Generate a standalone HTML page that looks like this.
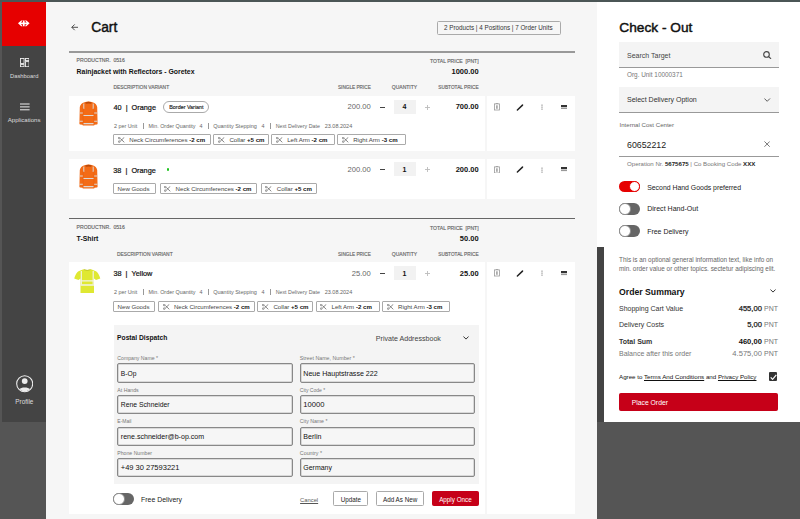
<!DOCTYPE html><html><head><meta charset="utf-8"><style>
*{margin:0;padding:0}
html,body{width:800px;height:519px;overflow:hidden;background:#555}
body{position:relative;font-family:"Liberation Sans", sans-serif}
body>div,body>svg{position:absolute}
.t{white-space:pre;line-height:1}
.tag{border:1px solid #aaa;box-sizing:border-box;background:#fff;border-radius:1px}
.t b{font-weight:700;color:#111}
.tag b{font-weight:700;color:#111}
.pill{border:0.8px solid #aaa;box-sizing:border-box;border-radius:6px;font-size:5.4px;font-weight:400;line-height:10.4px;text-align:center;color:#222;background:#fff;-webkit-text-stroke:0.15px #222}
.inp{border:1px solid #888;box-sizing:border-box;border-radius:2px;background:#f6f6f6;box-shadow:inset 0 0 0 0.5px #bbb}
.btn{border:1px solid #aaa;border-radius:1.5px;box-sizing:border-box;background:#fff;font-size:6.3px;line-height:15px;text-align:center;color:#222;white-space:pre}
.btn.red{background:#c60018;border-color:#c60018;color:#fff}
</style></head><body>
<div style="left:0px;top:0px;width:800px;height:519px;background:#555;"></div>
<div style="left:0px;top:0px;width:800px;height:2px;background:#4b5656;"></div>
<div style="left:46px;top:2px;width:551px;height:517px;background:#f6f6f6;"></div>
<div style="left:2px;top:2px;width:44px;height:420px;background:#444;"></div>
<div style="left:2px;top:2px;width:44px;height:44px;background:#e60000;"></div>
<div style="left:597px;top:2px;width:203px;height:420px;background:#fff;"></div>
<div style="left:597px;top:247px;width:7px;height:175px;background:#444;"></div>
<svg style="left:18.3px;top:20.4px" width="11.6" height="6.7" viewBox="0 0 13 8" preserveAspectRatio="none"><path d="M0 4 L3.6 0.6 H5.4 L3.2 2.9 H5.6 V0.6 H7.4 V2.9 H9.8 L7.6 0.6 H9.4 L13 4 L9.4 7.4 H7.6 L9.8 5.1 H7.4 V7.4 H5.6 V5.1 H3.2 L5.4 7.4 H3.6 Z" fill="#fff"/></svg>
<svg style="left:19.5px;top:58px" width="9.6" height="9.2" viewBox="0 0 9.6 9.2" fill="none" stroke="#eee" stroke-width="0.9"><rect x="0.45" y="0.45" width="3.6" height="5.1"/><rect x="0.45" y="6.6" width="3.6" height="2.15"/><rect x="5.5" y="0.45" width="3.6" height="2.15"/><rect x="5.5" y="3.6" width="3.6" height="5.15"/></svg>
<div class="t" style="left:10px;top:74px;font-size:5.8px;font-weight:400;color:#ddd;">Dashboard</div>
<svg style="left:19.5px;top:102px" width="10" height="9" viewBox="0 0 10 9" stroke="#eee" stroke-width="1"><path d="M0 2H9.6M0 4.9H9.6M0 7.8H9.6"/></svg>
<div class="t" style="left:7.7px;top:117px;font-size:6.1px;font-weight:400;color:#ddd;">Applications</div>
<svg style="left:15.8px;top:375.3px" width="17.4" height="17.4" viewBox="0 0 18 18"><circle cx="9" cy="9" r="8.3" fill="none" stroke="#eee" stroke-width="1.1"/><circle cx="9" cy="6.3" r="3" fill="#eee"/><path d="M3.6 14.6 C5 12.3 13 12.3 14.4 14.6 C13 16.2 11 17 9 17 C7 17 5 16.2 3.6 14.6Z" fill="#eee"/></svg>
<div class="t" style="left:15.3px;top:399px;font-size:6.4px;font-weight:400;color:#ddd;">Profile</div>
<svg style="left:71px;top:24.3px" width="7.4" height="6.6" viewBox="0 0 7.4 6.6" fill="none" stroke="#333" stroke-width="0.85"><path d="M7.2 3.3H0.8M3.7 0.4L0.8 3.3L3.7 6.2"/></svg>
<div class="t" style="left:91.2px;top:21px;font-size:13.8px;font-weight:400;color:#111;-webkit-text-stroke:0.45px #111;">Cart</div>
<div style="left:436.5px;top:20.5px;width:124.5px;height:14.0px;background:#f6f6f6;border:1px solid #aaa;box-sizing:border-box;border-radius:1.5px;"></div>
<div class="t" style="left:444px;top:25px;font-size:6.3px;font-weight:400;color:#333;">2 Products | 4 Positions | 7 Order Units</div>
<div style="left:69px;top:51px;width:506px;height:2px;background:#999;"></div>
<div class="t" style="left:76.6px;top:58px;font-size:5.1px;font-weight:400;color:#666;-webkit-text-stroke:0.15px #666;">PRODUCTNR.&nbsp;&nbsp;0516</div>
<div class="t" style="left:76.6px;top:69px;font-size:6.9px;font-weight:700;color:#111;">Rainjacket with Reflectors - Goretex</div>
<div class="t" style="right:321.40px;top:59px;font-size:5.1px;font-weight:400;color:#666;text-align:right;-webkit-text-stroke:0.15px #666;">TOTAL PRICE&nbsp;&nbsp;[PNT]</div>
<div class="t" style="right:321.40px;top:68px;font-size:7.5px;font-weight:700;color:#111;text-align:right;">1000.00</div>
<div class="t" style="left:113.5px;top:86px;font-size:4.9px;font-weight:400;color:#666;-webkit-text-stroke:0.15px #666;">DESCRIPTION VARIANT</div>
<div class="t" style="right:429.20px;top:86px;font-size:4.7px;font-weight:400;color:#666;text-align:right;-webkit-text-stroke:0.15px #666;">SINGLE PRICE</div>
<div class="t" style="left:391.8px;top:85px;font-size:5.0px;font-weight:400;color:#666;-webkit-text-stroke:0.15px #666;">QUANTITY</div>
<div class="t" style="right:321.40px;top:86px;font-size:4.75px;font-weight:400;color:#666;text-align:right;-webkit-text-stroke:0.15px #666;">SUBTOTAL PRICE</div>
<div style="left:69px;top:96px;width:416px;height:55px;background:#fff;"></div>
<svg style="left:78.5px;top:101px" width="19" height="25" viewBox="0 0 19 25"><path d="M5.5 1.2 Q9.5 -0.4 13.5 1.2 Q17.6 2.4 18.2 6 L18.6 22.8 Q18.6 23.5 17.8 23.6 L15.4 23.8 L15.2 24.6 L3.8 24.6 L3.6 23.8 L1.2 23.6 Q0.4 23.5 0.4 22.8 L0.8 6 Q1.4 2.4 5.5 1.2 Z" fill="#f36b16"/><path d="M6.3 1.4 Q9.5 0.2 12.7 1.4 L12.2 2.8 Q9.5 2.1 6.8 2.8 Z" fill="#b9490a"/><path d="M4.3 14.5H14.7M4.3 22.6H14.7M0.6 12H4M15 12H18.4M0.5 20.2H4M15 20.2H18.5" stroke="#dcd8d4" stroke-width="1.15"/><path d="M4.8 2.6V8M14.2 2.6V8" stroke="#dcd8d4" stroke-width="1"/><path d="M4.1 7V23.8M14.9 7V23.8" stroke="#e05c0c" stroke-width="0.4"/></svg>
<div class="t" style="left:113.5px;top:104px;font-size:7.3px;font-weight:400;color:#111;-webkit-text-stroke:0.2px #111;">40&nbsp;&nbsp;|&nbsp;&nbsp;Orange</div>
<div class="pill" style="left:163.4px;top:101.1px;width:46.1px;height:11.7px;">Border Variant</div>
<div class="t" style="left:113.9px;top:124px;font-size:5.4px;font-weight:400;color:#666;">2 per Unit</div>
<div style="left:142.6px;top:122.7px;width:0.8000000000000114px;height:5.999999999999986px;background:#999;"></div>
<div class="t" style="left:148.5px;top:124px;font-size:5.4px;font-weight:400;color:#666;">Min. Order Quantity</div>
<div class="t" style="left:199.4px;top:124px;font-size:5.4px;font-weight:400;color:#666;">4</div>
<div style="left:208px;top:122.7px;width:0.8000000000000114px;height:5.999999999999986px;background:#999;"></div>
<div class="t" style="left:213.2px;top:124px;font-size:5.5px;font-weight:400;color:#666;">Quantity Stepping</div>
<div class="t" style="left:261.5px;top:124px;font-size:5.4px;font-weight:400;color:#666;">4</div>
<div style="left:270px;top:122.7px;width:0.8000000000000114px;height:5.999999999999986px;background:#999;"></div>
<div class="t" style="left:275.7px;top:124px;font-size:5.3px;font-weight:400;color:#666;">Next Delivery Date</div>
<div class="t" style="left:324.7px;top:124px;font-size:5.5px;font-weight:400;color:#666;">23.08.2024</div>
<div class="tag" style="left:113.3px;top:134.3px;width:97.60px;height:10.90px;"></div>
<svg style="left:117.90px;top:137.20px" width="7" height="6" viewBox="0 0 7 6"><path d="M2.3 1.5L6.3 5.3M2.3 4.1L6.3 0.3" stroke="#555" stroke-width="0.7" fill="none"/><circle cx="1.2" cy="1.0" r="0.85" stroke="#555" stroke-width="0.6" fill="none"/><circle cx="1.2" cy="4.6" r="0.85" stroke="#555" stroke-width="0.6" fill="none"/></svg>
<div class="t" style="left:129.3px;top:137px;font-size:6.1px;font-weight:400;color:#444;">Neck Circumferences <b>-2 cm</b></div>
<div class="tag" style="left:213.4px;top:134.3px;width:55.80px;height:10.90px;"></div>
<svg style="left:218.00px;top:137.20px" width="7" height="6" viewBox="0 0 7 6"><path d="M2.3 1.5L6.3 5.3M2.3 4.1L6.3 0.3" stroke="#555" stroke-width="0.7" fill="none"/><circle cx="1.2" cy="1.0" r="0.85" stroke="#555" stroke-width="0.6" fill="none"/><circle cx="1.2" cy="4.6" r="0.85" stroke="#555" stroke-width="0.6" fill="none"/></svg>
<div class="t" style="left:229.4px;top:137px;font-size:6.1px;font-weight:400;color:#444;">Collar <b>+5 cm</b></div>
<div class="tag" style="left:271.2px;top:134.3px;width:64.10px;height:10.90px;"></div>
<svg style="left:275.80px;top:137.20px" width="7" height="6" viewBox="0 0 7 6"><path d="M2.3 1.5L6.3 5.3M2.3 4.1L6.3 0.3" stroke="#555" stroke-width="0.7" fill="none"/><circle cx="1.2" cy="1.0" r="0.85" stroke="#555" stroke-width="0.6" fill="none"/><circle cx="1.2" cy="4.6" r="0.85" stroke="#555" stroke-width="0.6" fill="none"/></svg>
<div class="t" style="left:287.2px;top:137px;font-size:6.1px;font-weight:400;color:#444;">Left Arm <b>-2 cm</b></div>
<div class="tag" style="left:337.2px;top:134.3px;width:68.80px;height:10.90px;"></div>
<svg style="left:341.80px;top:137.20px" width="7" height="6" viewBox="0 0 7 6"><path d="M2.3 1.5L6.3 5.3M2.3 4.1L6.3 0.3" stroke="#555" stroke-width="0.7" fill="none"/><circle cx="1.2" cy="1.0" r="0.85" stroke="#555" stroke-width="0.6" fill="none"/><circle cx="1.2" cy="4.6" r="0.85" stroke="#555" stroke-width="0.6" fill="none"/></svg>
<div class="t" style="left:353.2px;top:137px;font-size:6.1px;font-weight:400;color:#444;">Right Arm <b>-3 cm</b></div>
<div class="t" style="right:429.20px;top:103px;font-size:7.6px;font-weight:400;color:#666;text-align:right;">200.00</div>
<div style="left:379.6px;top:106.6px;width:5.0px;height:1.0px;background:#444;"></div>
<div style="left:393.5px;top:99.5px;width:22.0px;height:14.299999999999997px;background:#f2f2f2;"></div>
<div class="t" style="left:404.4px;top:103px;font-size:7.0px;font-weight:700;color:#111;transform:translateX(-50%);">4</div>
<svg style="left:424.9px;top:104.70px" width="5" height="5" viewBox="0 0 5 5"><path d="M0 2.5H5M2.5 0V5" stroke="#bbb" stroke-width="0.9"/></svg>
<div class="t" style="right:321.40px;top:103px;font-size:7.5px;font-weight:700;color:#111;text-align:right;">700.00</div>
<div style="left:487px;top:96px;width:88px;height:55px;background:#fff;"></div>
<svg style="left:494.3px;top:103px" width="6" height="7.5" viewBox="0 0 6 7.5" fill="none"><rect x="0.45" y="0.9" width="5" height="6.1" stroke="#999" stroke-width="0.8"/><path d="M1.8 0.5H4.2" stroke="#999" stroke-width="0.8"/><path d="M2.95 2.3V5.8" stroke="#444" stroke-width="0.8"/></svg>
<svg style="left:516px;top:103.5px" width="8" height="7" viewBox="0 0 8 7"><path d="M1.4 6.0L6.5 1.1" stroke="#222" stroke-width="1.5" stroke-linecap="round"/></svg>
<svg style="left:541px;top:104.00px" width="2" height="6" viewBox="0 0 2 6" fill="#888"><rect x="0.4" y="0.6" width="1.2" height="1.1"/><rect x="0.4" y="2.6" width="1.2" height="1.1"/><rect x="0.4" y="4.6" width="1.2" height="1.1"/></svg>
<svg style="left:561px;top:104.70px" width="6" height="4.5" viewBox="0 0 6 4.5"><rect x="0" y="0" width="6" height="2" fill="#333"/><rect x="0" y="2.5" width="6" height="1.6" fill="#999"/></svg>
<div style="left:69px;top:158.5px;width:416px;height:40.5px;background:#fff;"></div>
<svg style="left:78.5px;top:163.5px" width="19" height="25" viewBox="0 0 19 25"><path d="M5.5 1.2 Q9.5 -0.4 13.5 1.2 Q17.6 2.4 18.2 6 L18.6 22.8 Q18.6 23.5 17.8 23.6 L15.4 23.8 L15.2 24.6 L3.8 24.6 L3.6 23.8 L1.2 23.6 Q0.4 23.5 0.4 22.8 L0.8 6 Q1.4 2.4 5.5 1.2 Z" fill="#f36b16"/><path d="M6.3 1.4 Q9.5 0.2 12.7 1.4 L12.2 2.8 Q9.5 2.1 6.8 2.8 Z" fill="#b9490a"/><path d="M4.3 14.5H14.7M4.3 22.6H14.7M0.6 12H4M15 12H18.4M0.5 20.2H4M15 20.2H18.5" stroke="#dcd8d4" stroke-width="1.15"/><path d="M4.8 2.6V8M14.2 2.6V8" stroke="#dcd8d4" stroke-width="1"/><path d="M4.1 7V23.8M14.9 7V23.8" stroke="#e05c0c" stroke-width="0.4"/></svg>
<div class="t" style="left:113.3px;top:167px;font-size:7.3px;font-weight:400;color:#111;-webkit-text-stroke:0.2px #111;">38&nbsp;&nbsp;|&nbsp;&nbsp;Orange</div>
<div style="left:166.8px;top:168.3px;width:2.5999999999999943px;height:2.5999999999999943px;background:#1ec31e;border-radius:1.3px;"></div>
<div class="tag" style="left:113.3px;top:182.7px;width:42.90px;height:11.20px;"></div>
<div class="t" style="left:117.6px;top:186px;font-size:6.1px;font-weight:400;color:#444;">New Goods</div>
<div class="tag" style="left:159.6px;top:182.7px;width:97.20px;height:11.20px;"></div>
<svg style="left:164.20px;top:185.60px" width="7" height="6" viewBox="0 0 7 6"><path d="M2.3 1.5L6.3 5.3M2.3 4.1L6.3 0.3" stroke="#555" stroke-width="0.7" fill="none"/><circle cx="1.2" cy="1.0" r="0.85" stroke="#555" stroke-width="0.6" fill="none"/><circle cx="1.2" cy="4.6" r="0.85" stroke="#555" stroke-width="0.6" fill="none"/></svg>
<div class="t" style="left:175.6px;top:186px;font-size:6.1px;font-weight:400;color:#444;">Neck Circumferences <b>-2 cm</b></div>
<div class="tag" style="left:260.8px;top:182.7px;width:56.70px;height:11.20px;"></div>
<svg style="left:265.40px;top:185.60px" width="7" height="6" viewBox="0 0 7 6"><path d="M2.3 1.5L6.3 5.3M2.3 4.1L6.3 0.3" stroke="#555" stroke-width="0.7" fill="none"/><circle cx="1.2" cy="1.0" r="0.85" stroke="#555" stroke-width="0.6" fill="none"/><circle cx="1.2" cy="4.6" r="0.85" stroke="#555" stroke-width="0.6" fill="none"/></svg>
<div class="t" style="left:276.8px;top:186px;font-size:6.1px;font-weight:400;color:#444;">Collar <b>+5 cm</b></div>
<div class="t" style="right:429.20px;top:166px;font-size:7.6px;font-weight:400;color:#666;text-align:right;">200.00</div>
<div style="left:379.6px;top:169.1px;width:5.0px;height:1.0px;background:#444;"></div>
<div style="left:393.5px;top:162.0px;width:22.0px;height:14.300000000000011px;background:#f2f2f2;"></div>
<div class="t" style="left:404.4px;top:166px;font-size:7.0px;font-weight:700;color:#111;transform:translateX(-50%);">1</div>
<svg style="left:424.9px;top:167.20px" width="5" height="5" viewBox="0 0 5 5"><path d="M0 2.5H5M2.5 0V5" stroke="#bbb" stroke-width="0.9"/></svg>
<div class="t" style="right:321.40px;top:166px;font-size:7.5px;font-weight:700;color:#111;text-align:right;">200.00</div>
<div style="left:487px;top:158.5px;width:88px;height:40.5px;background:#fff;"></div>
<svg style="left:494.3px;top:165.5px" width="6" height="7.5" viewBox="0 0 6 7.5" fill="none"><rect x="0.45" y="0.9" width="5" height="6.1" stroke="#999" stroke-width="0.8"/><path d="M1.8 0.5H4.2" stroke="#999" stroke-width="0.8"/><path d="M2.95 2.3V5.8" stroke="#444" stroke-width="0.8"/></svg>
<svg style="left:516px;top:166.0px" width="8" height="7" viewBox="0 0 8 7"><path d="M1.4 6.0L6.5 1.1" stroke="#222" stroke-width="1.5" stroke-linecap="round"/></svg>
<svg style="left:541px;top:166.50px" width="2" height="6" viewBox="0 0 2 6" fill="#888"><rect x="0.4" y="0.6" width="1.2" height="1.1"/><rect x="0.4" y="2.6" width="1.2" height="1.1"/><rect x="0.4" y="4.6" width="1.2" height="1.1"/></svg>
<svg style="left:561px;top:167.20px" width="6" height="4.5" viewBox="0 0 6 4.5"><rect x="0" y="0" width="6" height="2" fill="#333"/><rect x="0" y="2.5" width="6" height="1.6" fill="#999"/></svg>
<div style="left:69px;top:217.6px;width:506px;height:1.3000000000000114px;background:#666;"></div>
<div class="t" style="left:76.6px;top:225px;font-size:5.1px;font-weight:400;color:#666;-webkit-text-stroke:0.15px #666;">PRODUCTNR.&nbsp;&nbsp;0516</div>
<div class="t" style="left:76.6px;top:236px;font-size:6.9px;font-weight:700;color:#111;">T-Shirt</div>
<div class="t" style="right:321.40px;top:226px;font-size:5.1px;font-weight:400;color:#666;text-align:right;-webkit-text-stroke:0.15px #666;">TOTAL PRICE&nbsp;&nbsp;[PNT]</div>
<div class="t" style="right:321.40px;top:235px;font-size:7.5px;font-weight:700;color:#111;text-align:right;">50.00</div>
<div class="t" style="left:117px;top:253px;font-size:4.9px;font-weight:400;color:#666;-webkit-text-stroke:0.15px #666;">DESCRIPTION VARIANT</div>
<div class="t" style="right:429.20px;top:253px;font-size:4.7px;font-weight:400;color:#666;text-align:right;-webkit-text-stroke:0.15px #666;">SINGLE PRICE</div>
<div class="t" style="left:391.8px;top:252px;font-size:5.0px;font-weight:400;color:#666;-webkit-text-stroke:0.15px #666;">QUANTITY</div>
<div class="t" style="right:321.40px;top:253px;font-size:4.75px;font-weight:400;color:#666;text-align:right;-webkit-text-stroke:0.15px #666;">SUBTOTAL PRICE</div>
<div style="left:69px;top:262.3px;width:416px;height:251.7px;background:#fff;"></div>
<svg style="left:74.3px;top:268.5px" width="26.5" height="24.5" viewBox="0 0 26.5 24.5"><path d="M9.5 0.3 Q13.2 1.8 17 0.3 L22 2.2 Q24.5 3.5 26.3 9.5 L22 11 L20 9.5 L20 24.2 L6.5 24.2 L6.5 9.5 L4.5 11 L0.2 9.5 Q2 3.5 4.5 2.2 Z" fill="#dfe832"/><path d="M7.3 2V15.5M19.2 2V15.5" stroke="#f2f2e6" stroke-width="1.2"/><path d="M6.5 11.8H20M6.5 16H20" stroke="#f2f2e6" stroke-width="1.3"/><path d="M10 0.6 Q13.2 2.2 16.5 0.6" stroke="#a9ae20" stroke-width="0.6" fill="none"/></svg>
<div class="t" style="left:113.4px;top:270px;font-size:7.3px;font-weight:400;color:#111;-webkit-text-stroke:0.2px #111;">38&nbsp;&nbsp;|&nbsp;&nbsp;Yellow</div>
<div class="t" style="left:113.9px;top:290px;font-size:5.4px;font-weight:400;color:#666;">2 per Unit</div>
<div style="left:142.6px;top:288.8px;width:0.8000000000000114px;height:6.0px;background:#999;"></div>
<div class="t" style="left:148.5px;top:290px;font-size:5.4px;font-weight:400;color:#666;">Min. Order Quantity</div>
<div class="t" style="left:199.4px;top:290px;font-size:5.4px;font-weight:400;color:#666;">4</div>
<div style="left:208px;top:288.8px;width:0.8000000000000114px;height:6.0px;background:#999;"></div>
<div class="t" style="left:213.2px;top:290px;font-size:5.5px;font-weight:400;color:#666;">Quantity Stepping</div>
<div class="t" style="left:261.5px;top:290px;font-size:5.4px;font-weight:400;color:#666;">4</div>
<div style="left:270px;top:288.8px;width:0.8000000000000114px;height:6.0px;background:#999;"></div>
<div class="t" style="left:275.7px;top:290px;font-size:5.3px;font-weight:400;color:#666;">Next Delivery Date</div>
<div class="t" style="left:324.7px;top:290px;font-size:5.5px;font-weight:400;color:#666;">23.08.2024</div>
<div class="tag" style="left:113.3px;top:301.1px;width:42.20px;height:11.20px;"></div>
<div class="t" style="left:117.6px;top:304px;font-size:6.1px;font-weight:400;color:#444;">New Goods</div>
<div class="tag" style="left:157.9px;top:301.1px;width:97.10px;height:11.20px;"></div>
<svg style="left:162.50px;top:304.00px" width="7" height="6" viewBox="0 0 7 6"><path d="M2.3 1.5L6.3 5.3M2.3 4.1L6.3 0.3" stroke="#555" stroke-width="0.7" fill="none"/><circle cx="1.2" cy="1.0" r="0.85" stroke="#555" stroke-width="0.6" fill="none"/><circle cx="1.2" cy="4.6" r="0.85" stroke="#555" stroke-width="0.6" fill="none"/></svg>
<div class="t" style="left:173.9px;top:304px;font-size:6.1px;font-weight:400;color:#444;">Neck Circumferences <b>-2 cm</b></div>
<div class="tag" style="left:257.4px;top:301.1px;width:55.70px;height:11.20px;"></div>
<svg style="left:262.00px;top:304.00px" width="7" height="6" viewBox="0 0 7 6"><path d="M2.3 1.5L6.3 5.3M2.3 4.1L6.3 0.3" stroke="#555" stroke-width="0.7" fill="none"/><circle cx="1.2" cy="1.0" r="0.85" stroke="#555" stroke-width="0.6" fill="none"/><circle cx="1.2" cy="4.6" r="0.85" stroke="#555" stroke-width="0.6" fill="none"/></svg>
<div class="t" style="left:273.4px;top:304px;font-size:6.1px;font-weight:400;color:#444;">Collar <b>+5 cm</b></div>
<div class="tag" style="left:315.5px;top:301.1px;width:64.00px;height:11.20px;"></div>
<svg style="left:320.10px;top:304.00px" width="7" height="6" viewBox="0 0 7 6"><path d="M2.3 1.5L6.3 5.3M2.3 4.1L6.3 0.3" stroke="#555" stroke-width="0.7" fill="none"/><circle cx="1.2" cy="1.0" r="0.85" stroke="#555" stroke-width="0.6" fill="none"/><circle cx="1.2" cy="4.6" r="0.85" stroke="#555" stroke-width="0.6" fill="none"/></svg>
<div class="t" style="left:331.5px;top:304px;font-size:6.1px;font-weight:400;color:#444;">Left Arm <b>-2 cm</b></div>
<div class="tag" style="left:382px;top:301.1px;width:67.50px;height:11.20px;"></div>
<svg style="left:386.60px;top:304.00px" width="7" height="6" viewBox="0 0 7 6"><path d="M2.3 1.5L6.3 5.3M2.3 4.1L6.3 0.3" stroke="#555" stroke-width="0.7" fill="none"/><circle cx="1.2" cy="1.0" r="0.85" stroke="#555" stroke-width="0.6" fill="none"/><circle cx="1.2" cy="4.6" r="0.85" stroke="#555" stroke-width="0.6" fill="none"/></svg>
<div class="t" style="left:398px;top:304px;font-size:6.1px;font-weight:400;color:#444;">Right Arm <b>-3 cm</b></div>
<div class="t" style="right:429.20px;top:270px;font-size:7.6px;font-weight:400;color:#666;text-align:right;">25.00</div>
<div style="left:379.6px;top:272.90000000000003px;width:5.0px;height:1.0px;background:#444;"></div>
<div style="left:393.5px;top:265.8px;width:22.0px;height:14.300000000000011px;background:#f2f2f2;"></div>
<div class="t" style="left:404.4px;top:270px;font-size:7.0px;font-weight:700;color:#111;transform:translateX(-50%);">1</div>
<svg style="left:424.9px;top:271.00px" width="5" height="5" viewBox="0 0 5 5"><path d="M0 2.5H5M2.5 0V5" stroke="#bbb" stroke-width="0.9"/></svg>
<div class="t" style="right:321.40px;top:270px;font-size:7.5px;font-weight:700;color:#111;text-align:right;">25.00</div>
<div style="left:487px;top:262.3px;width:88px;height:251.7px;background:#fff;"></div>
<svg style="left:494.3px;top:269.3px" width="6" height="7.5" viewBox="0 0 6 7.5" fill="none"><rect x="0.45" y="0.9" width="5" height="6.1" stroke="#999" stroke-width="0.8"/><path d="M1.8 0.5H4.2" stroke="#999" stroke-width="0.8"/><path d="M2.95 2.3V5.8" stroke="#444" stroke-width="0.8"/></svg>
<svg style="left:516px;top:269.8px" width="8" height="7" viewBox="0 0 8 7"><path d="M1.4 6.0L6.5 1.1" stroke="#222" stroke-width="1.5" stroke-linecap="round"/></svg>
<svg style="left:541px;top:270.30px" width="2" height="6" viewBox="0 0 2 6" fill="#888"><rect x="0.4" y="0.6" width="1.2" height="1.1"/><rect x="0.4" y="2.6" width="1.2" height="1.1"/><rect x="0.4" y="4.6" width="1.2" height="1.1"/></svg>
<svg style="left:561px;top:271.00px" width="6" height="4.5" viewBox="0 0 6 4.5"><rect x="0" y="0" width="6" height="2" fill="#333"/><rect x="0" y="2.5" width="6" height="1.6" fill="#999"/></svg>
<div style="left:113.5px;top:325px;width:365.2px;height:158.5px;background:#f4f4f4;"></div>
<div class="t" style="left:117.1px;top:335px;font-size:6.7px;font-weight:700;color:#111;">Postal Dispatch</div>
<div class="t" style="right:359.10px;top:336px;font-size:7.1px;font-weight:400;color:#444;text-align:right;">Private Addressbook</div>
<svg style="left:463.3px;top:336px" width="6" height="3.8" viewBox="0 0 6 3.8" fill="none" stroke="#333" stroke-width="1"><path d="M0.4 0.5L3 3.1L5.6 0.5"/></svg>
<div class="t" style="left:117.3px;top:356px;font-size:5.17px;font-weight:400;color:#777;">Company Name *</div>
<div class="inp" style="left:117.1px;top:363.3px;width:175.50000000000003px;height:19.3px;"></div>
<div class="t" style="left:120.8px;top:371px;font-size:6.7px;font-weight:400;color:#111;">B-Op</div>
<div class="t" style="left:299.8px;top:356px;font-size:5.3px;font-weight:400;color:#777;">Street Name, Number *</div>
<div class="inp" style="left:299.6px;top:363.3px;width:175.89999999999998px;height:19.3px;"></div>
<div class="t" style="left:303.3px;top:371px;font-size:7.08px;font-weight:400;color:#111;">Neue Hauptstrasse 222</div>
<div class="t" style="left:117.3px;top:388px;font-size:5.2px;font-weight:400;color:#777;">At Hands</div>
<div class="inp" style="left:117.1px;top:395.1px;width:175.50000000000003px;height:19.3px;"></div>
<div class="t" style="left:120.8px;top:402px;font-size:6.8px;font-weight:400;color:#111;">Rene Schneider</div>
<div class="t" style="left:299.8px;top:388px;font-size:5.04px;font-weight:400;color:#777;">City Code *</div>
<div class="inp" style="left:299.6px;top:395.1px;width:175.89999999999998px;height:19.3px;"></div>
<div class="t" style="left:303.3px;top:401px;font-size:7.6px;font-weight:400;color:#111;">10000</div>
<div class="t" style="left:117.3px;top:419px;font-size:5.0px;font-weight:400;color:#777;">E-Mail</div>
<div class="inp" style="left:117.1px;top:426.6px;width:175.50000000000003px;height:19.3px;"></div>
<div class="t" style="left:120.8px;top:433px;font-size:7.07px;font-weight:400;color:#111;">rene.schneider@b-op.com</div>
<div class="t" style="left:299.8px;top:419px;font-size:5.2px;font-weight:400;color:#777;">City Name *</div>
<div class="inp" style="left:299.6px;top:426.6px;width:175.89999999999998px;height:19.3px;"></div>
<div class="t" style="left:303.3px;top:434px;font-size:7.08px;font-weight:400;color:#111;">Berlin</div>
<div class="t" style="left:117.3px;top:451px;font-size:5.17px;font-weight:400;color:#777;">Phone Number</div>
<div class="inp" style="left:117.1px;top:458px;width:175.50000000000003px;height:19.3px;"></div>
<div class="t" style="left:120.8px;top:464px;font-size:7.5px;font-weight:400;color:#111;">+49 30 27593221</div>
<div class="t" style="left:299.8px;top:451px;font-size:5.35px;font-weight:400;color:#777;">Country *</div>
<div class="inp" style="left:299.6px;top:458px;width:175.89999999999998px;height:19.3px;"></div>
<div class="t" style="left:303.3px;top:464px;font-size:6.98px;font-weight:400;color:#111;">Germany</div>
<div style="left:113.0px;top:493.1px;width:21px;height:11.5px;border-radius:6px;background:#666;"></div>
<div style="left:113.0px;top:493.1px;width:11.5px;height:11.5px;border-radius:50%;background:#fff;border:0.9px solid #888;box-sizing:border-box;"></div>
<div class="t" style="left:141.1px;top:497px;font-size:6.9px;font-weight:400;color:#222;">Free Delivery</div>
<div class="t" style="left:300.1px;top:498px;font-size:5.8px;font-weight:400;color:#555;text-decoration:underline;">Cancel</div>
<div class="btn" style="left:333.3px;top:491.1px;width:35.2px;height:15.4px;">Update</div>
<div class="btn" style="left:375.8px;top:491.1px;width:48.6px;height:15.4px;">Add As New</div>
<div class="btn red" style="left:432.2px;top:491.1px;width:46.5px;height:15.4px;">Apply Once</div>
<div class="t" style="left:619.3px;top:21px;font-size:13.7px;font-weight:400;color:#111;-webkit-text-stroke:0.45px #111;">Check - Out</div>
<div style="left:619px;top:42px;width:159.5px;height:25.799999999999997px;background:#f4f4f4;border-bottom:1px solid #999;box-sizing:border-box;"></div>
<div class="t" style="left:627px;top:52px;font-size:7.0px;font-weight:400;color:#444;">Search Target</div>
<svg style="left:763px;top:51px" width="8.6" height="8.2" viewBox="0 0 8.6 8.2" fill="none" stroke="#444" stroke-width="1.1"><circle cx="3.5" cy="3.4" r="2.8"/><path d="M5.5 5.5L8.1 7.8"/></svg>
<div class="t" style="left:627px;top:72px;font-size:6.4px;font-weight:400;color:#777;">Org. Unit 10000371</div>
<div style="left:619px;top:86.8px;width:159.5px;height:25.799999999999997px;background:#f4f4f4;border-bottom:1px solid #999;box-sizing:border-box;"></div>
<div class="t" style="left:627px;top:96px;font-size:7.05px;font-weight:400;color:#333;">Select Delivery Option</div>
<svg style="left:764.2px;top:97.6px" width="6.4" height="4" viewBox="0 0 6.4 4" fill="none" stroke="#555" stroke-width="0.95"><path d="M0.4 0.5L3.2 3.3L6 0.5"/></svg>
<div class="t" style="left:619.5px;top:122px;font-size:6.1px;font-weight:400;color:#666;">Internal Cost Center</div>
<div class="t" style="left:627px;top:141px;font-size:8.8px;font-weight:400;color:#222;">60652212</div>
<svg style="left:764.3px;top:141.2px" width="6.2" height="6.2" viewBox="0 0 7 7" fill="none" stroke="#555" stroke-width="0.9"><path d="M0.5 0.5L6.5 6.5M6.5 0.5L0.5 6.5"/></svg>
<div style="left:619px;top:156px;width:159.79999999999995px;height:1px;background:#999;"></div>
<div class="t" style="left:627px;top:161px;font-size:6.1px;font-weight:400;color:#777;">Operation Nr. <b style="color:#222">5675675</b> | Co Booking Code <b style="color:#222">XXX</b></div>
<div style="left:619px;top:180.8px;width:21px;height:11.5px;border-radius:6px;background:#e60000;"></div>
<div style="left:628.5px;top:180.8px;width:11.5px;height:11.5px;border-radius:50%;background:#fff;border:1px solid #e60000;box-sizing:border-box;"></div>
<div class="t" style="left:647.2px;top:185px;font-size:6.9px;font-weight:400;color:#222;">Second Hand Goods preferred</div>
<div style="left:619px;top:203px;width:21px;height:11.5px;border-radius:6px;background:#666;"></div>
<div style="left:619px;top:203px;width:11.5px;height:11.5px;border-radius:50%;background:#fff;border:0.9px solid #888;box-sizing:border-box;"></div>
<div class="t" style="left:647.2px;top:205px;font-size:7.06px;font-weight:400;color:#222;">Direct Hand-Out</div>
<div style="left:619px;top:225.3px;width:21px;height:11.5px;border-radius:6px;background:#666;"></div>
<div style="left:619px;top:225.3px;width:11.5px;height:11.5px;border-radius:50%;background:#fff;border:0.9px solid #888;box-sizing:border-box;"></div>
<div class="t" style="left:647.2px;top:229px;font-size:6.95px;font-weight:400;color:#222;">Free Delivery</div>
<div class="t" style="left:619px;top:257px;font-size:6.4px;font-weight:400;color:#666;">This is an optional general information text, like info on</div>
<div class="t" style="left:619px;top:266px;font-size:6.4px;font-weight:400;color:#666;">min. order value or other topics. sectetur adipiscing elit.</div>
<div class="t" style="left:619px;top:288px;font-size:8.7px;font-weight:700;color:#111;">Order Summary</div>
<svg style="left:769.5px;top:289.3px" width="6" height="3.8" viewBox="0 0 6 3.8" fill="none" stroke="#333" stroke-width="1"><path d="M0.4 0.5L3 3.1L5.6 0.5"/></svg>
<div class="t" style="left:619px;top:305px;font-size:7.0px;font-weight:400;color:#333;">Shopping Cart Value</div>
<div class="t" style="right:38.10px;top:305px;font-size:7.6px;font-weight:400;color:#222;text-align:right;-webkit-text-stroke:0.25px #222;">455,00</div>
<div class="t" style="right:22.00px;top:305px;font-size:7.0px;font-weight:400;color:#777;text-align:right;">PNT</div>
<div class="t" style="left:619px;top:321px;font-size:7.0px;font-weight:400;color:#333;">Delivery Costs</div>
<div class="t" style="right:38.10px;top:321px;font-size:7.6px;font-weight:400;color:#222;text-align:right;-webkit-text-stroke:0.25px #222;">5,00</div>
<div class="t" style="right:22.00px;top:321px;font-size:7.0px;font-weight:400;color:#777;text-align:right;">PNT</div>
<div class="t" style="left:619px;top:338px;font-size:7.0px;font-weight:700;color:#333;">Total Sum</div>
<div class="t" style="right:38.10px;top:338px;font-size:7.6px;font-weight:700;color:#111;text-align:right;">460,00</div>
<div class="t" style="right:22.00px;top:338px;font-size:7.0px;font-weight:400;color:#777;text-align:right;">PNT</div>
<div class="t" style="left:619px;top:350px;font-size:7.0px;font-weight:400;color:#777;">Balance after this order</div>
<div class="t" style="right:38.10px;top:350px;font-size:7.6px;font-weight:400;color:#777;text-align:right;">4.575,00</div>
<div class="t" style="right:22.00px;top:350px;font-size:7.0px;font-weight:400;color:#777;text-align:right;">PNT</div>
<div class="t" style="left:619px;top:374px;font-size:6.2px;font-weight:400;color:#111;text-decoration-thickness:0.6px;">Agree to <u>Terms And Conditions</u> and <u>Privacy Policy</u></div>
<div style="left:768.8px;top:372px;width:8.7px;height:9px;background:#333;border-radius:1px;"></div>
<svg style="left:770px;top:373.5px" width="7" height="6.5" viewBox="0 0 7 6.5" fill="none" stroke="#fff" stroke-width="1.2"><path d="M0.7 3.3L2.6 5.3L6.3 0.9"/></svg>
<div class="btn red" style="left:619.2px;top:393.2px;width:159.3px;height:18px;border-radius:1.5px;text-align:left;padding-left:11.5px;box-sizing:border-box;font-size:6.8px;line-height:18.4px;">Place Order</div>
</body></html>
